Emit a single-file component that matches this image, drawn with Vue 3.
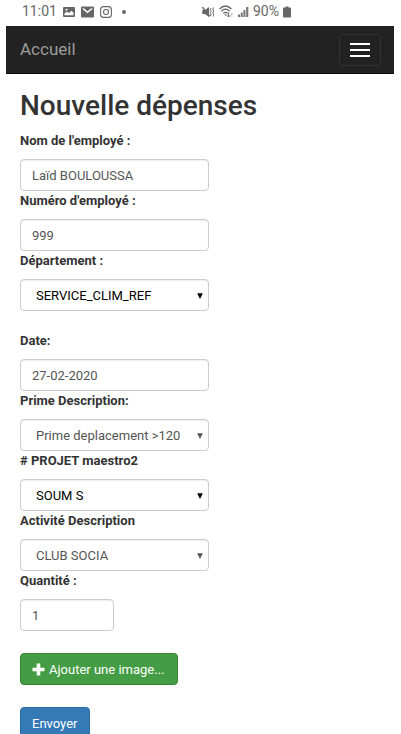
<script setup>
import { reactive } from 'vue'

const form = reactive({
  nom: 'Laïd BOULOUSSA',
  numero: '999',
  departement: 'SERVICE_CLIM_REF',
  date: '27-02-2020',
  prime: 'Prime deplacement >120',
  projet: 'SOUM S',
  activite: 'CLUB SOCIA',
  quantite: '1'
})

const fields = [
  { id: 'nom', label: "Nom de l'employé :", type: 'text' },
  { id: 'numero', label: "Numéro d'employé :", type: 'text' },
  { id: 'departement', label: 'Département :', type: 'select', dark: true, spaced: true },
  { id: 'date', label: 'Date:', type: 'text' },
  { id: 'prime', label: 'Prime Description:', type: 'select' },
  { id: 'projet', label: '# PROJET maestro2', type: 'select', dark: true },
  { id: 'activite', label: 'Activité Description', type: 'select' },
  { id: 'quantite', label: 'Quantité :', type: 'text', small: true }
]
</script>

<template>
  <div class="page">
    <div class="status">
      <div class="status-left">
        <span>11:01</span>
        <svg width="12" height="12" viewBox="0 0 12 12">
          <rect x="0" y="1" width="12" height="10" rx="1" fill="#666" />
          <path d="M1.5 9.2V7.2L4 5.8L6 7L8.5 4.8L10.5 6.8V9.2Z" fill="#fff" />
          <circle cx="3.5" cy="3.8" r="1" fill="#fff" />
        </svg>
        <svg width="13" height="12" viewBox="0 0 13 12">
          <rect x="0" y="0.5" width="13" height="11" rx="1" fill="#666" />
          <path d="M2 2.5L6.5 6.3L11 2.5" fill="none" stroke="#fff" stroke-width="1.6" />
        </svg>
        <svg width="12" height="12" viewBox="0 0 12 12" fill="none" stroke="#666">
          <rect x="0.6" y="0.6" width="10.8" height="10.8" rx="3" stroke-width="1.1" />
          <circle cx="6" cy="6" r="2.5" stroke-width="1.1" />
          <circle cx="9" cy="3" r="0.5" fill="#666" stroke="none" />
        </svg>
        <i class="dot"></i>
      </div>
      <div class="status-right">
        <svg width="13" height="12" viewBox="0 0 13 12">
          <path d="M0.3 4H3L7 1V11L3 8H0.3Z" fill="#666" />
          <path d="M0.5 1.2L7.8 10.4" stroke="#666" stroke-width="1.4" />
          <path d="M9 2L8.2 3.5L9.2 5L8.2 6.5L9.2 8L8.4 10M11.6 1.5L10.8 3.2L11.8 5L10.8 6.8L11.8 8.5L11 10.5" fill="none" stroke="#666" stroke-width="1" />
        </svg>
        <svg width="15" height="13" viewBox="0 0 15 13" fill="none" stroke="#666" stroke-width="1.2">
          <path d="M0.5 4Q6.5 -2 12.5 4" />
          <path d="M2.3 6.2Q6.5 2.2 10.7 6.2" />
          <path d="M4.2 8.4Q6.5 6.2 8.8 8.4" />
          <path d="M5.2 9.2H7.8L6.5 11Z" fill="#666" stroke="none" />
          <path d="M9.6 7.5V12M8 10.4L9.6 12L11.2 10.4" stroke-width="1" />
          <path d="M12.8 12V8M11.8 9.2L12.8 8L13.8 9.2" stroke="#bbb" stroke-width="0.8" />
        </svg>
        <svg width="11" height="12" viewBox="0 0 11 12" fill="#777">
          <rect x="0" y="8.5" width="2" height="2.5" />
          <rect x="2.7" y="6.5" width="2" height="4.5" />
          <rect x="5.4" y="4" width="2" height="7" />
          <rect x="8.1" y="1" width="2.2" height="10" />
        </svg>
        <span>90%</span>
        <svg width="8" height="12" viewBox="0 0 8 12" fill="#666">
          <rect x="2.5" y="0.5" width="3" height="2" />
          <rect x="0" y="1.6" width="8" height="10" rx="1" />
        </svg>
      </div>
    </div>

    <nav class="navbar">
      <a class="brand" href="#">Accueil</a>
      <button type="button" class="toggle" aria-label="Menu">
        <i class="bar"></i>
        <i class="bar"></i>
        <i class="bar"></i>
      </button>
    </nav>

    <form class="content" @submit.prevent>
      <h2>Nouvelle dépenses</h2>
      <div v-for="f in fields" :key="f.id" class="field" :class="{ spaced: f.spaced }">
        <label :for="f.id">{{ f.label }}</label>
        <div v-if="f.type === 'select'" class="select" :class="{ dark: f.dark }">
          <select :id="f.id" v-model="form[f.id]" class="control">
            <option>{{ form[f.id] }}</option>
          </select>
          <svg class="arrow" width="6" height="6" viewBox="0 0 6 6">
            <path d="M0.2 0.2H5.8L3 6Z" fill="currentColor" />
          </svg>
        </div>
        <input v-else :id="f.id" v-model="form[f.id]" type="text" class="control" :class="{ small: f.small }">
      </div>
      <div class="actions">
        <button type="button" class="btn btn-success">
          <svg width="13" height="13" viewBox="0 0 13 13">
            <path d="M4.7 0.5H8.3V4.7H12.5V8.3H8.3V12.5H4.7V8.3H0.5V4.7H4.7Z" fill="#fff" />
          </svg>
          <span>Ajouter une image...</span>
        </button>
        <button type="submit" class="btn btn-primary">Envoyer</button>
      </div>
    </form>
  </div>
</template>

<style>
html {
  scrollbar-width: none;
}

body {
  margin: 0;
  background: #fff;
}
</style>

<style scoped>
* {
  box-sizing: border-box;
}

.page {
  padding: 0 7px 0 6px;
  font-family: Roboto, "Liberation Sans", sans-serif;
  font-size: 13px;
  line-height: 19px;
  color: #333;
}

.status {
  display: flex;
  height: 26px;
  padding: 0 103px 3px 16px;
  align-items: center;
  justify-content: space-between;
  font-size: 14px;
  color: #666;
}

.status-left,
.status-right {
  display: flex;
  align-items: center;
}

.status-left {
  gap: 6px;
}

.status-right {
  gap: 4px;
}

.dot {
  width: 4px;
  height: 4px;
  margin-left: 4px;
  border-radius: 50%;
  background: #666;
}

.navbar {
  display: flex;
  height: 48px;
  padding: 0 13px 0 14px;
  align-items: center;
  justify-content: space-between;
  background: #222;
  border-bottom: 1px solid #080808;
}

.brand {
  font-size: 17px;
  color: #9d9d9d;
  text-decoration: none;
}

.toggle {
  display: flex;
  flex-direction: column;
  gap: 4px;
  padding: 8px 10px;
  background: transparent;
  border: 1px solid #333;
  border-radius: 4px;
}

.bar {
  width: 20px;
  height: 2px;
  background: #fff;
}

.content {
  padding: 0 14px;
}

h2 {
  margin: 0;
  padding: 16px 0 9px;
  font-size: 28px;
  font-weight: 500;
  line-height: 32px;
}

.field {
  display: flex;
  flex-direction: column;
  align-items: flex-start;
}

.spaced {
  margin-bottom: 20px;
}

label {
  margin-bottom: 9px;
  font-weight: 700;
}

.control {
  display: block;
  width: 189px;
  height: 32px;
  padding: 0 11px;
  font: inherit;
  color: #555;
  background: #fff;
  border: 1px solid #ccc;
  border-radius: 4px;
  box-shadow: inset 0 1px 1px rgba(0, 0, 0, 0.07);
  outline: none;
}

.small {
  width: 94px;
}

.select {
  position: relative;
  color: #555;
}

.select .control {
  appearance: none;
  padding: 0 28px 0 15px;
  color: inherit;
}

.select.dark {
  color: #000;
}

.arrow {
  position: absolute;
  top: 14px;
  right: 6px;
  pointer-events: none;
}

.actions {
  display: flex;
  flex-direction: column;
  align-items: flex-start;
  gap: 22px;
  padding: 22px 0;
}

.btn {
  display: flex;
  height: 32px;
  padding: 0 12px 0 11px;
  align-items: center;
  gap: 4px;
  font: inherit;
  color: #fff;
  border: 1px solid;
  border-radius: 4px;
}

.btn-success {
  background: #449d44;
  border-color: #398439;
}

.btn-primary {
  background: #337ab7;
  border-color: #2e6da4;
}
</style>
